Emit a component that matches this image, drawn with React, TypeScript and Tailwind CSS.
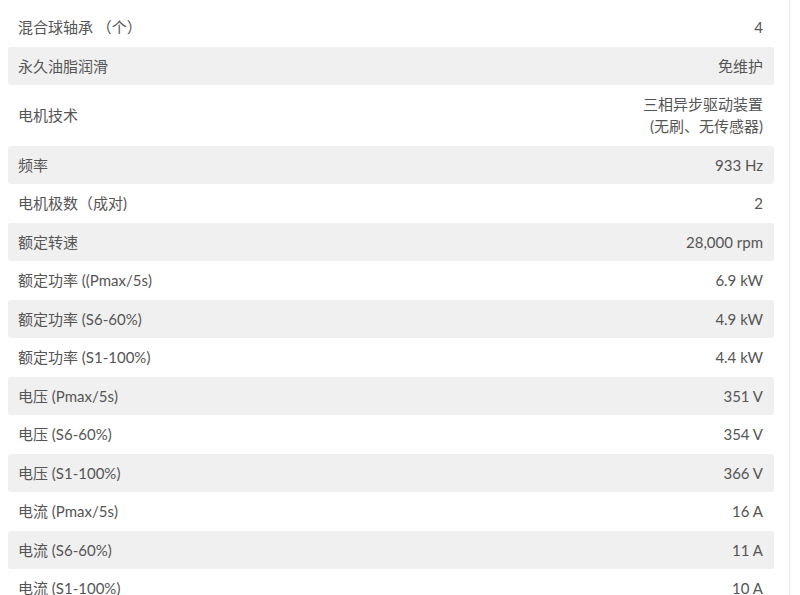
import React from "react";

const rows: [string, string | string[]][] = [
  ["混合球轴承 （个）", "4"],
  ["永久油脂润滑", "免维护"],
  ["电机技术", ["三相异步驱动装置", "(无刷、无传感器)"]],
  ["频率", "933 Hz"],
  ["电机极数（成对)", "2"],
  ["额定转速", "28,000 rpm"],
  ["额定功率 ((Pmax/5s)", "6.9 kW"],
  ["额定功率 (S6-60%)", "4.9 kW"],
  ["额定功率 (S1-100%)", "4.4 kW"],
  ["电压 (Pmax/5s)", "351 V"],
  ["电压 (S6-60%)", "354 V"],
  ["电压 (S1-100%)", "366 V"],
  ["电流 (Pmax/5s)", "16 A"],
  ["电流 (S6-60%)", "11 A"],
  ["电流 (S1-100%)", "10 A"],
];

export default function App() {
  return (
    <div
      className="w-[790px] h-[595px] overflow-hidden border-r border-[#ececec] bg-white text-[#555] text-[15px]"
      style={{ fontFamily: '"Lato", "Noto Sans CJK SC", sans-serif' }}
    >
      <div className="pl-[8px] pr-[15px] pt-[8px]">
        {rows.map(([k, v], i) => (
          <div
            key={i}
            className={`flex justify-between items-center pl-[10px] pr-[11px] py-[8.25px] leading-[22px] rounded-[3px] ${
              i % 2 === 1 ? "bg-[#f0f0f0]" : "bg-white"
            }`}
          >
            <div>{k}</div>
            <div className="text-right">
              {Array.isArray(v) ? v.map((l, j) => <div key={j}>{l}</div>) : v}
            </div>
          </div>
        ))}
      </div>
    </div>
  );
}
